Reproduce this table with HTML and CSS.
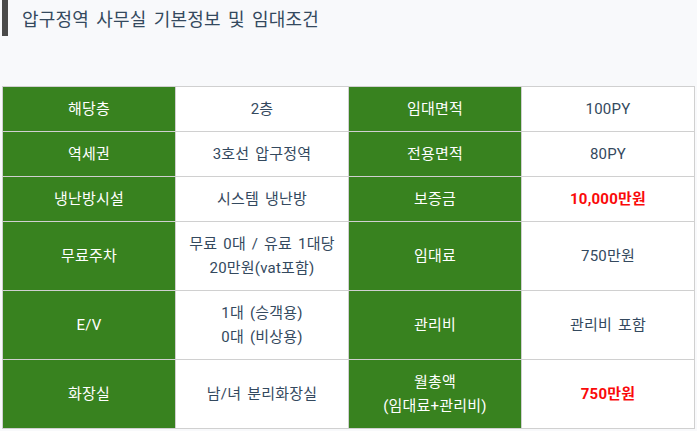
FILE: index.html
```html
<!DOCTYPE html>
<html lang="ko">
<head>
<meta charset="utf-8">
<link rel="stylesheet" href="styles.css">
</head>
<body>
<div class="page">
  <h2 class="title">압구정역 사무실 기본정보 및 임대조건</h2>
  <table class="info">
    <tr>
      <th>해당층</th><td>2층</td>
      <th>임대면적</th><td>100PY</td>
    </tr>
    <tr>
      <th>역세권</th><td>3호선 압구정역</td>
      <th>전용면적</th><td>80PY</td>
    </tr>
    <tr>
      <th>냉난방시설</th><td>시스템 냉난방</td>
      <th>보증금</th><td class="red">10,000만원</td>
    </tr>
    <tr class="tall">
      <th>무료주차</th><td>무료 0대 / 유료 1대당<br>20만원(vat포함)</td>
      <th>임대료</th><td>750만원</td>
    </tr>
    <tr class="tall">
      <th>E/V</th><td>1대 (승객용)<br>0대 (비상용)</td>
      <th>관리비</th><td>관리비 포함</td>
    </tr>
    <tr class="tall">
      <th>화장실</th><td>남/녀 분리화장실</td>
      <th>월총액<br>(임대료+관리비)</th><td class="red">750만원</td>
    </tr>
  </table>
</div>
</body>
</html>
```

FILE: styles.css
```css
html, body {
  margin: 0;
  padding: 0;
  background: #f8f9fb;
}
body {
  font-family: Roboto, "Noto Sans CJK KR", sans-serif;
  color: #34495e;
}
.page {
  padding: 0 3px 0 2px;
}
.title {
  margin: 0;
  height: 36px;
  line-height: 36px;
  border-left: 6px solid #4a4a4a;
  padding-left: 14px;
  font-size: 18px;
  font-weight: normal;
  color: #34495e;
  font-family: "Noto Sans CJK KR", sans-serif;
  letter-spacing: 0.2px;
  word-spacing: 2px;
}
.info {
  margin-top: 50px;
  width: 693px;
  border-collapse: collapse;
  table-layout: fixed;
  background: #fff;
  border: 1px solid #cfcfcf;
}
.info th, .info td {
  border: 1px solid #d0d0d0;
  text-align: center;
  vertical-align: middle;
  font-size: 15px;
  line-height: 24px;
  padding: 10px 4px;
  height: 24px;
  letter-spacing: 0.2px;
  word-spacing: 2px;
}
.info th {
  background: #38821f;
  color: #fff;
  font-weight: normal;
}
.info td {
  color: #34495e;
  background: #fff;
}
.info tr.tall th, .info tr.tall td {
  height: 48px;
}
.info td.red {
  color: #fa0a0a;
  font-weight: bold;
  word-spacing: 0;
}
```
